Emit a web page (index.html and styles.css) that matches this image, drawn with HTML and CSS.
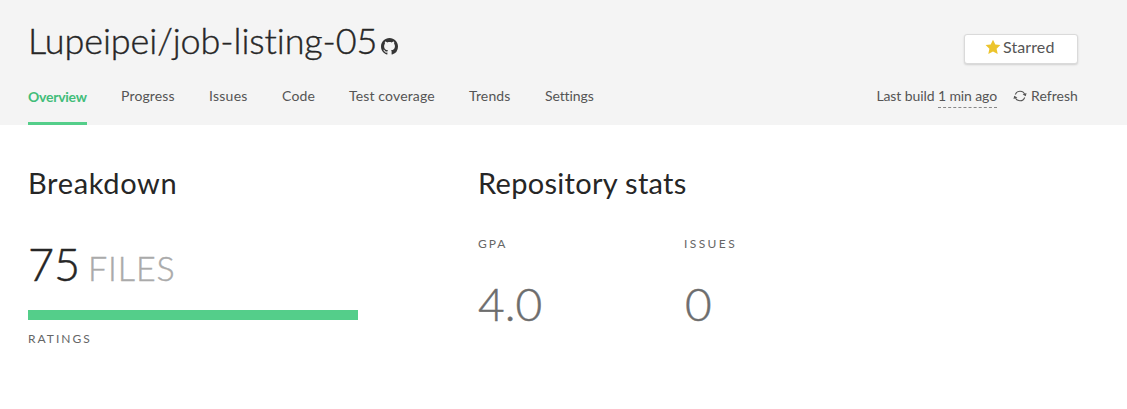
FILE: index.html
```html
<!DOCTYPE html>
<html lang="en">
<head>
<meta charset="utf-8">
<title>Lupeipei/job-listing-05</title>
<link rel="stylesheet" href="styles.css">
</head>
<body>
<header class="header">
  <div class="title-row">
    <h1 class="title"><span class="repo-name">Lupeipei/job-listing-05</span><svg class="github" viewBox="0 0 16 16"><path d="M8 0C3.58 0 0 3.58 0 8c0 3.54 2.29 6.53 5.47 7.59.4.07.55-.17.55-.38 0-.19-.01-.82-.01-1.49-2.01.37-2.53-.49-2.69-.94-.09-.23-.48-.94-.82-1.13-.28-.15-.68-.52-.01-.53.63-.01 1.08.58 1.23.82.72 1.21 1.87.87 2.33.66.07-.52.28-.87.51-1.07-1.78-.2-3.64-.89-3.64-3.95 0-.87.31-1.59.82-2.15-.08-.2-.36-1.02.08-2.12 0 0 .67-.21 2.2.82.64-.18 1.32-.27 2-.27s1.36.09 2 .27c1.53-1.04 2.2-.82 2.2-.82.44 1.1.16 1.92.08 2.12.51.56.82 1.27.82 2.15 0 3.07-1.87 3.75-3.65 3.95.29.25.54.73.54 1.48 0 1.07-.01 1.93-.01 2.2 0 .21.15.46.55.38A8.01 8.01 0 0 0 16 8c0-4.42-3.58-8-8-8z"/></svg></h1>
    <button class="star-button"><svg class="star" viewBox="0 0 16 16"><path d="M8 .8l2.3 4.8 5.1.5-3.8 3.7 1.1 5.2L8 12.5 3.3 15l1.1-5.2L.6 6.1l5.1-.5z"/></svg><span class="star-label">Starred</span></button>
  </div>
  <div class="nav-row">
    <nav class="tabs">
      <a class="tab overview">Overview</a>
      <a class="tab progress">Progress</a>
      <a class="tab issues">Issues</a>
      <a class="tab code">Code</a>
      <a class="tab coverage">Test coverage</a>
      <a class="tab trends">Trends</a>
      <a class="tab settings">Settings</a>
    </nav>
    <div class="build">
      <span class="last">Last build <span class="time">1 min ago</span></span>
      <a class="refresh"><svg class="sync" viewBox="0 0 14 12"><path d="M2.3 4.5A5 5 0 0 1 11.8 4.8M11.7 7.5A5 5 0 0 1 2.2 7.2"/><path class="tip" d="M9.6 4.6l3.9-1.6-.7 3.3zM4.4 7.4L.5 9l.7-3.3z"/></svg><span>Refresh</span></a>
    </div>
  </div>
</header>
<main class="main">
  <section class="breakdown">
    <h2 class="heading breakdown-heading">Breakdown</h2>
    <p class="files"><span class="count">75</span><span class="unit">FILES</span></p>
    <div class="bar"></div>
    <p class="label ratings">RATINGS</p>
  </section>
  <section class="stats">
    <h2 class="heading stats-heading">Repository stats</h2>
    <dl class="stat-list">
      <div class="stat"><dt class="label">GPA</dt><dd class="value">4.0</dd></div>
      <div class="stat"><dt class="label issues-label">ISSUES</dt><dd class="value zero">0</dd></div>
    </dl>
  </section>
</main>
</body>
</html>
```
FILE: styles.css
```css
* { box-sizing: border-box; }
body { margin: 0; background: #fff; color: #262626; font-family: Lato, "Open Sans", sans-serif; font-variant-ligatures: none; white-space: nowrap; }
h1, h2, p, dl, dd { margin: 0; font-weight: 400; }
.header { height: 125px; padding: 0 49px 0 28px; background: #f4f4f4; }
.title-row { display: flex; justify-content: space-between; height: 82px; }
.title { display: flex; align-items: flex-start; padding-top: 19px; font-size: 36px; line-height: 42px; font-weight: 300; }
.repo-name { width: 349px; margin-right: 4px; letter-spacing: -.1px; -webkit-text-stroke: .4px #262626; }
.github { width: 17px; height: 17px; margin-top: 19px; fill: #363636; }
.star-button { display: flex; width: 114px; height: 30px; margin-top: 34px; padding: 0 0 0 20px; border: 1px solid #dadada; border-radius: 3px; background: #fff; box-shadow: 0 1px 2px rgba(0,0,0,.15); color: #555; font: 16px/24px Lato, sans-serif; }
.star { width: 16px; height: 16px; margin: 4px 2px 0 0; fill: #ecc42c; }
.star-label { letter-spacing: .1px; }
.nav-row { display: flex; justify-content: space-between; height: 43px; font-size: 14px; line-height: 20px; color: #555; }
.tabs { display: flex; gap: 34px; }
.tab { padding-top: 4px; }
.overview { width: 59px; padding-top: 5px; border-bottom: 3px solid #54ce8a; color: #42bd79; font-weight: 700; letter-spacing: -.25px; }
.progress { width: 54px; letter-spacing: .15px; }
.issues { width: 39px; letter-spacing: .25px; }
.code { width: 33px; letter-spacing: .2px; }
.coverage { width: 86px; letter-spacing: .15px; }
.trends { width: 42px; letter-spacing: .15px; }
.settings { letter-spacing: -.1px; }
.build { display: flex; gap: 16px; padding-top: 4px; letter-spacing: -.1px; }
.time { display: inline-block; height: 22px; border-bottom: 1px dashed #888; }
.refresh { display: flex; gap: 4px; letter-spacing: .05px; }
.sync { width: 14px; height: 12px; margin-top: 4px; fill: none; stroke: #555; stroke-width: 1.1; }
.tip { fill: #555; stroke: none; }
.main { display: flex; padding: 40px 28px 0; }
.breakdown { width: 330px; margin-right: 120px; }
.heading { font-size: 29px; line-height: 36px; height: 36px; letter-spacing: .3px; }
.breakdown-heading { letter-spacing: .65px; }
.files { display: flex; align-items: baseline; height: 56px; margin-top: 35px; line-height: 56px; font-weight: 300; }
.count { width: 60px; font-size: 45px; -webkit-text-stroke: .5px #262626; }
.unit { font-size: 34px; letter-spacing: .9px; color: #aaa; -webkit-text-stroke: .4px #aaa; }
.bar { height: 10px; margin-top: 18px; background: #54ce8a; }
.label { font-size: 12px; line-height: 16px; letter-spacing: 2px; color: #666; }
.issues-label { letter-spacing: 2.4px; }
.ratings { margin-top: 11px; }
.stat-list { display: flex; margin-top: 35px; }
.stat { width: 206px; }
.value { margin-top: 24px; font-size: 46px; line-height: 55px; font-weight: 300; color: #6d6d6d; -webkit-text-stroke: .5px #6d6d6d; }
.zero { padding-left: 1px; }
```
